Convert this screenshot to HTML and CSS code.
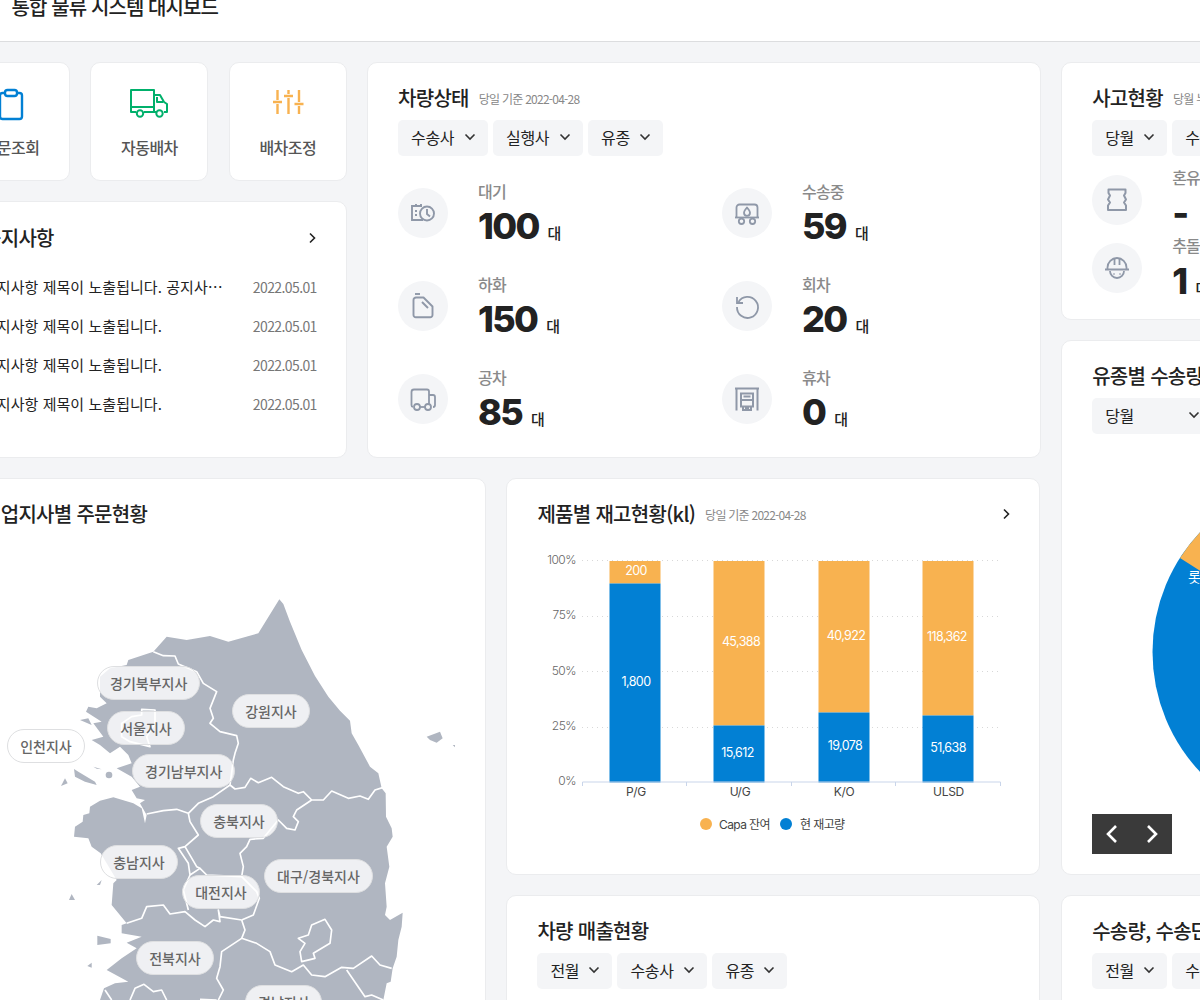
FILE: index.html
```html
<!DOCTYPE html>
<html lang="ko">
<head>
<meta charset="utf-8">
<title>통합 물류 시스템 대시보드</title>
<link rel="stylesheet" href="styles.css">
</head>
<body>
<div class="page">
  <header class="topbar"><h1 class="topbar-title">통합 물류 시스템 대시보드</h1></header>
  <main class="layout">
    <div class="col-main">
      <div class="row-top">
        <div class="col-left">
          <div class="quick-row">
            <a class="quick-card">
              <svg class="quick-icon" viewBox="0 0 38 38" fill="none" stroke="#0280d4" stroke-width="2.4" stroke-linejoin="round"><rect x="8" y="7" width="22" height="26" rx="2.5"/><rect x="13" y="4" width="12" height="6" rx="2.5" fill="#fff"/></svg>
              <span class="quick-label">주문조회</span>
            </a>
            <a class="quick-card">
              <svg class="quick-icon" viewBox="0 0 38 38" fill="none" stroke="#00b06b" stroke-width="2" stroke-linejoin="round"><path d="M6 26H1V4h23v22h-10"/><path d="M24 9h6l4 7 3 2v8h-3"/><path d="M27 11v5h6"/><path d="M1 21h23"/><circle cx="10" cy="27.500" r="3.200"/><circle cx="29.500" cy="27.500" r="3.200"/><path d="M14 26h12"/></svg>
              <span class="quick-label">자동배차</span>
            </a>
            <a class="quick-card">
              <svg class="quick-icon" viewBox="0 0 38 38" fill="none" stroke="#f8b250" stroke-width="2.400"><path d="M8.500 4v10M8.500 18v10M19.500 4v4M19.500 12v16M30 4v12M30 20v8M4 16h9M15 10h9M25.500 18h9"/></svg>
              <span class="quick-label">배차조정</span>
            </a>
          </div>
          <section class="card notice">
            <div class="notice-head">
              <h2 class="card-title">공지사항</h2>
              <svg class="chev-link" viewBox="0 0 10 12" fill="none" stroke="#222" stroke-width="1.6"><path d="M3 1.5 7.5 6 3 10.500"/></svg>
            </div>
            <ul class="notice-list">
              <li class="notice-row"><span class="notice-text">공지사항 제목이 노출됩니다. 공지사항 제목이 노출됩니다.</span><span class="notice-date">2022.05.01</span></li>
              <li class="notice-row"><span class="notice-text">공지사항 제목이 노출됩니다.</span><span class="notice-date">2022.05.01</span></li>
              <li class="notice-row"><span class="notice-text">공지사항 제목이 노출됩니다.</span><span class="notice-date">2022.05.01</span></li>
              <li class="notice-row"><span class="notice-text">공지사항 제목이 노출됩니다.</span><span class="notice-date">2022.05.01</span></li>
            </ul>
          </section>
        </div>
        <section class="card status">
          <div class="title-row"><h2 class="card-title">차량상태</h2><span class="card-sub">당일 기준 2022-04-28</span></div>
          <div class="selects">
            <div class="select wide">수송사<svg class="chev" viewBox="0 0 12 8" fill="none" stroke="#333" stroke-width="1.6"><path d="M1.500 1.500 6 6l4.500-4.500"/></svg></div>
            <div class="select wide">실행사<svg class="chev" viewBox="0 0 12 8" fill="none" stroke="#333" stroke-width="1.6"><path d="M1.500 1.500 6 6l4.500-4.500"/></svg></div>
            <div class="select">유종<svg class="chev" viewBox="0 0 12 8" fill="none" stroke="#333" stroke-width="1.6"><path d="M1.500 1.500 6 6l4.500-4.500"/></svg></div>
          </div>
          <div class="status-grid">
            <div class="stat">
              <div class="stat-icon"><svg class="stat-svg" viewBox="0 0 30 30" fill="none" stroke="#8f98a8" stroke-width="1.900"><path d="M14 8H4v14h11M8 6v3M13 6v3M7 13h2M7 17h2"/><circle cx="19" cy="15.500" r="7"/><path d="M19 11v5l3 2.500"/></svg></div>
              <div class="stat-body"><div class="stat-label">대기</div><div class="stat-value">100<span class="stat-unit">대</span></div></div>
            </div>
            <div class="stat">
              <div class="stat-icon"><svg class="stat-svg" viewBox="0 0 30 30" fill="none" stroke="#8f98a8" stroke-width="1.800" stroke-linejoin="round"><path d="M4.500 19v-9.500a3 3 0 0 1 3-3h15a3 3 0 0 1 3 3V19"/><path d="M15 9.500c-2 2.300-3 3.800-3 5.300a3 3 0 0 0 6 0c0-1.500-1-3-3-5.300z"/><path d="M3 19.500h24"/><circle cx="9.500" cy="23.300" r="2.700"/><circle cx="20.500" cy="23.300" r="2.700"/></svg></div>
              <div class="stat-body"><div class="stat-label">수송중</div><div class="stat-value">59<span class="stat-unit">대</span></div></div>
            </div>
            <div class="stat">
              <div class="stat-icon"><svg class="stat-svg" viewBox="0 0 30 30" fill="none" stroke="#8f98a8" stroke-width="1.900" stroke-linejoin="round"><path d="M7 3h5"/><path d="M8 6.500h7.500l9 9V24a2.300 2.300 0 0 1-2.300 2.300H7.800A2.300 2.300 0 0 1 5.500 24V9a2.500 2.500 0 0 1 2.500-2.500z"/><path d="M14 11l6 6"/></svg></div>
              <div class="stat-body"><div class="stat-label">하화</div><div class="stat-value">150<span class="stat-unit">대</span></div></div>
            </div>
            <div class="stat">
              <div class="stat-icon"><svg class="stat-svg" viewBox="0 0 30 30" fill="none" stroke="#8f98a8" stroke-width="1.800"><path d="M6.500 11A10.500 10.500 0 1 1 5 16"/><path d="M5 6v6h6"/></svg></div>
              <div class="stat-body"><div class="stat-label">회차</div><div class="stat-value">20<span class="stat-unit">대</span></div></div>
            </div>
            <div class="stat">
              <div class="stat-icon"><svg class="stat-svg" viewBox="0 0 30 30" fill="none" stroke="#8f98a8" stroke-width="1.800" stroke-linejoin="round"><path d="M5 23a2 2 0 0 1-1.500-2V8A2.500 2.500 0 0 1 6 5.500h13a2 2 0 0 1 2 2V21"/><path d="M21 11h4a2 2 0 0 1 2 2v8a2 2 0 0 1-2 2"/><circle cx="9" cy="23" r="3"/><circle cx="20" cy="23" r="3"/><path d="M12 23h5"/></svg></div>
              <div class="stat-body"><div class="stat-label">공차</div><div class="stat-value">85<span class="stat-unit">대</span></div></div>
            </div>
            <div class="stat">
              <div class="stat-icon"><svg class="stat-svg" viewBox="0 0 30 30" fill="none" stroke="#8f98a8" stroke-width="2"><path d="M3 4.500h24M4.500 4.500v22M25.500 4.500v22"/><path d="M9 9.500h12v13H9zM9 16h12M11.500 12.500h7M11 22v4h3v-4M19 22v4h-3v-4"/></svg></div>
              <div class="stat-body"><div class="stat-label">휴차</div><div class="stat-value">0<span class="stat-unit">대</span></div></div>
            </div>
          </div>
        </section>
      </div>
      <div class="row-bottom">
        <section class="card map-card">
          <div class="card-head"><h2 class="card-title">영업지사별 주문현황</h2></div>
          <div class="map-canvas">
            <svg class="map-svg" viewBox="0 0 1440 1230">
              <g fill="#b0b6c1">
                <path d="M838 28 850 42 870 95 905 180 945 258 985 320 1020 362 1050 392 1055 430 1075 465 1110 530 1135 550 1145 595 1157 610 1158 680 1175 715 1178 740 1160 770 1168 830 1155 880 1160 950 1155 975 1170 990 1208 968 1205 1010 1195 1050 1190 1100 1178 1135 1172 1175 1160 1180 1150 1230 300 1230 312 1195 345 1180 385 1175 320 1140 365 1105 410 1075 380 1058 425 1040 365 1030 365 1005 380 1000 335 945 340 880 350 870 302 790 275 770 265 745 222 740 225 710 248 695 250 675 268 670 270 650 300 632 340 622 400 640 425 655 435 700 440 675 420 640 435 630 410 625 395 600 420 590 395 560 350 535 395 520 385 495 360 470 330 490 300 465 275 450 310 440 280 400 305 395 258 365 265 350 290 355 320 340 300 320 300 260 330 235 380 225 385 210 460 185 500 140 560 150 630 138 685 155 775 130z"/>
                <path d="M1280 440 1320 425 1328 445 1310 458 1290 450z"/>
                <path d="M1358 465 1365 465 1365 472z"/>
                <path d="M240 390 265 385 275 405z"/>
                <path d="M222 537 235 545 285 575 290 585 255 575 225 560z"/>
                <path d="M280 530 305 538 290 536z"/>
                <circle cx="327" cy="555" r="10"/>
                <path d="M183 588 195 565 203 580z"/>
                <path d="M290 885 305 870 300 885z"/>
                <path d="M207 930 215 912 225 930z"/>
                <path d="M292 1037 332 1047 332 1060 292 1065z"/>
                <path d="M262 1128 275 1118 275 1133z"/>
              </g>
              <g fill="none" stroke="#fff" stroke-width="5" stroke-linejoin="round">
                <path d="M460 185 490 197 525 198 535 222 590 245 610 280 650 305 630 355 640 385 630 400 660 425 710 437 715 460 705 490 700 510 690 585"/>
                <path d="M690 585 640 620 595 640 565 670 530 658 490 662 440 672"/>
                <path d="M690 585 705 597 735 592 752 565 775 578 815 562 850 590 895 610 910 605 935 630 970 630 995 603 1045 625 1080 618 1105 628 1125 600 1150 592"/>
                <path d="M935 630 890 660 880 680 895 695 885 720 860 715 835 690 810 720 790 745 750 748 740 770 720 790 730 830 725 860 770 905 778 925 760 975 725 990"/>
                <path d="M565 670 570 695 595 735 555 770 535 775 565 820 570 855 600 835 620 855 725 860"/>
                <path d="M555 770 590 830 600 835"/>
                <path d="M570 855 550 900 565 960"/>
                <path d="M380 1000 425 985 440 950 490 945 510 972 555 965 585 990 615 1010 640 990 660 995 655 960 660 980 725 990"/>
                <path d="M725 990 735 1020 725 1045 770 1060 810 1085 825 1125 875 1145 910 1125 935 1155 975 1160 1025 1132 1060 1135 1115 1098 1140 1125 1175 1135"/>
                <path d="M725 1045 665 1085 660 1130 650 1165 670 1200 655 1230"/>
                <path d="M975 988 995 1020 990 1060 940 1090 945 1105 905 1115 900 1085 915 1060 895 1045 925 1035 935 1005z"/>
                <path d="M1040 1140 1095 1220 1115 1215 1150 1230"/>
                <path d="M315 1200 335 1230M390 1230 405 1195 432 1183 460 1205 485 1200 500 1230M600 1228 650 1230"/>
                <path d="M425 358 465 360 465 400 440 440 450 470 390 455 365 440 365 400 395 380 425 375z"/>
              </g>
            </svg>
            <span class="pin pin-gb">경기북부지사</span>
            <span class="pin pin-gw">강원지사</span>
            <span class="pin pin-se">서울지사</span>
            <span class="pin pin-ic">인천지사</span>
            <span class="pin pin-gn">경기남부지사</span>
            <span class="pin pin-cb">충북지사</span>
            <span class="pin pin-cn">충남지사</span>
            <span class="pin pin-dj">대전지사</span>
            <span class="pin pin-dg">대구/경북지사</span>
            <span class="pin pin-jb">전북지사</span>
            <span class="pin pin-gs">경남지사</span>
          </div>
        </section>
        <div class="col-mid">
          <section class="card chart-card">
            <div class="card-head head-between">
              <div class="title-row"><h2 class="card-title">제품별 재고현황(kl)</h2><span class="card-sub">당일 기준 2022-04-28</span></div>
              <svg class="chev-link" viewBox="0 0 10 12" fill="none" stroke="#222" stroke-width="1.6"><path d="M3 1.5 7.5 6 3 10.500"/></svg>
            </div>
            <svg class="chart-svg" viewBox="506 540 534 334">
              <g class="grid-lines">
                <path d="M582 560.500H1001M582 616.500H1001M582 671.500H1001M582 727.500H1001"/>
              </g>
              <g class="axis-y">
                <text x="576" y="564">100%</text><text x="576" y="619">75%</text><text x="576" y="675">50%</text><text x="576" y="730">25%</text><text x="576" y="785">0%</text>
              </g>
              <rect class="bar-o" x="609.500" y="561" width="51" height="22.500"/><rect class="bar-b" x="609.500" y="583.500" width="51" height="199"/>
              <rect class="bar-o" x="713.500" y="561" width="51" height="164.500"/><rect class="bar-b" x="713.500" y="725.500" width="51" height="57"/>
              <rect class="bar-o" x="818.500" y="561" width="51" height="151.500"/><rect class="bar-b" x="818.500" y="712.500" width="51" height="70"/>
              <rect class="bar-o" x="922.500" y="561" width="51" height="154.500"/><rect class="bar-b" x="922.500" y="715.500" width="51" height="67"/>
              <g class="bar-val">
                <text x="636" y="575">200</text><text x="636" y="686">1,800</text>
                <text x="741" y="646">45,388</text><text x="737.500" y="757">15,612</text>
                <text x="846" y="640">40,922</text><text x="845" y="750">19,078</text>
                <text x="947" y="641">118,362</text><text x="948" y="752">51,638</text>
              </g>
              <path class="axis-line" d="M582.500 786v-4H1000.500v4M686.500 782v4M791.500 782v4M895.500 782v4"/>
              <g class="axis-x">
                <text x="636" y="796">P/G</text><text x="740" y="796">U/G</text><text x="844" y="796">K/O</text><text x="948.500" y="796">ULSD</text>
              </g>
              <circle cx="706" cy="824" r="6" fill="#f8b250"/><text class="legend" x="719" y="829">Capa 잔여</text>
              <circle cx="786" cy="824" r="6" fill="#0280d4"/><text class="legend" x="800" y="829">현 재고량</text>
            </svg>
          </section>
          <section class="card sales-card">
            <h2 class="card-title">차량 매출현황</h2>
            <div class="selects">
              <div class="select">전월<svg class="chev" viewBox="0 0 12 8" fill="none" stroke="#333" stroke-width="1.6"><path d="M1.500 1.500 6 6l4.500-4.500"/></svg></div>
              <div class="select wide">수송사<svg class="chev" viewBox="0 0 12 8" fill="none" stroke="#333" stroke-width="1.6"><path d="M1.500 1.500 6 6l4.500-4.500"/></svg></div>
              <div class="select">유종<svg class="chev" viewBox="0 0 12 8" fill="none" stroke="#333" stroke-width="1.6"><path d="M1.500 1.500 6 6l4.500-4.500"/></svg></div>
            </div>
          </section>
        </div>
      </div>
    </div>
    <div class="col-right">
      <section class="card accident">
        <div class="title-row"><h2 class="card-title">사고현황</h2><span class="card-sub">당월 누적 기준 2022-04-28</span></div>
        <div class="selects">
          <div class="select">당월<svg class="chev" viewBox="0 0 12 8" fill="none" stroke="#333" stroke-width="1.6"><path d="M1.500 1.500 6 6l4.500-4.500"/></svg></div>
          <div class="select wide">수송사<svg class="chev" viewBox="0 0 12 8" fill="none" stroke="#333" stroke-width="1.6"><path d="M1.500 1.500 6 6l4.500-4.500"/></svg></div>
        </div>
        <div class="acc-list">
          <div class="acc-row">
            <div class="stat-icon"><svg class="stat-svg" viewBox="0 0 30 30" fill="none" stroke="#8f98a8" stroke-width="2" stroke-linejoin="round"><path d="M6.500 4.500h17V8L22 10.500l2 4-2 3 2 3V25H6v-4.500l2-3-2-3 2-4L6.500 8z"/></svg></div>
            <div class="stat-body"><div class="stat-label">혼유</div><div class="stat-value">-</div></div>
          </div>
          <div class="acc-row">
            <div class="stat-icon"><svg class="stat-svg" viewBox="0 0 30 30" fill="none" stroke="#8f98a8" stroke-width="1.800"><path d="M3 16.500h24M5.500 16.500v-2a9.500 9.500 0 0 1 19 0v2"/><path d="M12.500 5v7M17.500 5v7M8 18a7 7 0 0 0 14 0"/><path d="M11.500 21h1M17.500 21h1"/></svg></div>
            <div class="stat-body"><div class="stat-label">추돌</div><div class="stat-value">1<span class="stat-unit">대</span></div></div>
          </div>
        </div>
      </section>
      <section class="card product">
        <h2 class="card-title">유종별 수송량</h2>
        <div class="selects"><div class="select xl">당월<svg class="chev" viewBox="0 0 12 8" fill="none" stroke="#333" stroke-width="1.6"><path d="M1.500 1.500 6 6l4.500-4.500"/></svg></div></div>
        <div class="pie-wrap">
          <svg class="pie-svg" viewBox="0 0 400 380">
            <circle cx="235.500" cy="190" r="175" fill="#0280d4"/>
            <path d="M235.500 190 88 96A175 175 0 0 1 235.500 15z" fill="#f8b250"/>
            <text class="pie-label" x="96" y="120">롯데</text>
          </svg>
          <div class="pager">
            <svg class="pager-svg" viewBox="0 0 14 20" fill="none" stroke="#fff" stroke-width="2.600"><path d="M11 2 3 10l8 8"/></svg>
            <svg class="pager-svg" viewBox="0 0 14 20" fill="none" stroke="#fff" stroke-width="2.600"><path d="m3 2 8 8-8 8"/></svg>
          </div>
        </div>
      </section>
      <section class="card transport">
        <h2 class="card-title">수송량, 수송단가</h2>
        <div class="selects">
          <div class="select">전월<svg class="chev" viewBox="0 0 12 8" fill="none" stroke="#333" stroke-width="1.6"><path d="M1.500 1.500 6 6l4.500-4.500"/></svg></div>
          <div class="select wide">수송사<svg class="chev" viewBox="0 0 12 8" fill="none" stroke="#333" stroke-width="1.6"><path d="M1.500 1.500 6 6l4.500-4.500"/></svg></div>
        </div>
      </section>
    </div>
  </main>
</div>
</body>
</html>
```
FILE: styles.css
```css
* { box-sizing: border-box; }
html, body { margin: 0; height: 1000px; overflow: hidden; background: #f4f5f7; }
body { font-family: "Noto Sans CJK KR", "Noto Sans", sans-serif; color: #222; }
h1, h2, ul { margin: 0; padding: 0; }
ul { list-style: none; }

.page { width: 1643px; margin: -30px 0 0 -48px; }
.topbar { height: 72px; padding: 22px 0 0 59.5px; background: #fff; border-bottom: 1px solid #dcdddf; }
.topbar-title { font-size: 20px; line-height: 30px; font-weight: 500; color: #222; letter-spacing: -0.9px; }

.layout { display: flex; gap: 20.6px; padding-top: 20px; }
.col-main { width: 1088.6px; display: flex; flex-direction: column; gap: 20px; }
.col-right { width: 534px; display: flex; flex-direction: column; gap: 20px; }
.row-top { display: flex; gap: 20.2px; height: 396px; }
.row-bottom { display: flex; gap: 20.4px; }
.col-left { width: 394.8px; display: flex; flex-direction: column; gap: 20px; }
.col-mid { width: 534px; display: flex; flex-direction: column; gap: 20px; }

.card { background: #fff; border: 1px solid #ebecee; border-radius: 10px; }
.card-title { font-size: 20px; line-height: 30px; font-weight: 500; color: #222; letter-spacing: -0.7px; }
.card-sub { font-size: 12px; color: #888; letter-spacing: -0.75px; }
.title-row { display: flex; align-items: center; gap: 10px; }
.card-head { padding: 20px 30px 0; }
.head-between { display: flex; justify-content: space-between; align-items: center; padding-right: 28px; }
.chev-link { width: 10px; height: 12px; flex: none; }

.quick-row { display: flex; gap: 20.5px; height: 119px; }
.quick-card { flex: 1; background: #fff; border: 1px solid #ebecee; border-radius: 10px; display: flex; flex-direction: column; align-items: center; padding-top: 23px; }
.quick-icon { width: 38px; height: 38px; flex: none; }
.quick-label { margin-top: 10px; font-size: 16px; line-height: 26px; font-weight: 500; color: #555; letter-spacing: -0.5px; }

.notice { flex: 1; padding: 21px 29px 0 30px; }
.notice-head { display: flex; justify-content: space-between; align-items: center; }
.notice-list { margin-top: 14px; }
.notice-row { display: flex; justify-content: space-between; align-items: center; height: 39px; gap: 29px; }
.notice-text { flex: 1; min-width: 0; font-size: 15px; color: #222; letter-spacing: 0.05px; white-space: nowrap; overflow: hidden; text-overflow: ellipsis; }
.notice-date { flex: none; font-size: 14px; color: #777; letter-spacing: -0.6px; }

.status { width: 673.6px; padding: 20px 30px 0; }
.selects { display: flex; gap: 5px; margin-top: 7px; }
.select { width: 75px; height: 36px; padding: 0 12px 2px 13px; background: #f4f5f7; border-radius: 5px; display: flex; align-items: center; justify-content: space-between; font-size: 16px; letter-spacing: -0.3px; color: #222; flex: none; }
.select.wide { width: 90px; }
.select.xl { width: 120px; }
.chev { width: 12px; height: 8px; }

.status-grid { display: grid; grid-template-columns: 324px 1fr; grid-auto-rows: 93px; margin-top: 24px; }
.stat { display: flex; gap: 30px; }
.stat-icon { width: 50px; height: 50px; margin-top: 8px; border-radius: 50%; background: #f4f5f7; display: flex; align-items: center; justify-content: center; flex: none; }
.stat-svg { width: 30px; height: 30px; }
.stat-label { font-size: 16px; line-height: 22px; font-weight: 500; color: #8a8a8a; letter-spacing: -0.8px; }
.stat-value { margin-top: 2px; font-family: Inter, sans-serif; font-size: 36px; line-height: 44px; font-weight: 800; color: #222; letter-spacing: -1.7px; }
.stat-unit { margin-left: 9px; font-family: "Noto Sans CJK KR", sans-serif; font-size: 15px; font-weight: 500; letter-spacing: 0; }

.accident { height: 258px; padding: 20px 30px 0; }
.accident .card-sub { white-space: nowrap; }
.acc-list { margin-top: 19px; display: flex; flex-direction: column; gap: 18px; }
.acc-row { display: flex; gap: 30px; height: 50px; }
.acc-row .stat-icon { margin-top: 0; }
.acc-row .stat-value { line-height: 36px; margin-top: 7px; }
.acc-row .stat-label { margin-top: -9px; }

.product { height: 535px; padding: 20px 30px 0; }
.pie-wrap { position: relative; }
.pie-svg { display: block; position: absolute; left: 0; top: 28px; width: 400px; height: 380px; }
.pie-label { font-size: 14px; fill: #fff; font-family: "Noto Sans CJK KR", sans-serif; }
.pager { position: absolute; left: 0; top: 380px; width: 80px; height: 40px; background: #3a3a3a; display: flex; align-items: center; justify-content: space-between; padding: 0 13px; }
.pager-svg { width: 14px; height: 20px; }
.transport, .sales-card { padding: 20px 30px 0; height: 400px; }

.map-card { width: 534px; }
.map-canvas { position: relative; margin-top: 61px; padding-left: 47px; height: 470px; }
.map-svg { display: block; width: 480px; height: 410px; }
.pin { position: absolute; height: 34px; padding: 0 12px; border-radius: 17px; background: rgba(255, 255, 255, 0.8); border: 1px solid #dedfe1; font-size: 14px; font-weight: 500; line-height: 32px; color: #666; text-align: center; white-space: nowrap; }
.pin-gb { left: 144px; top: 76px; width: 103px; }
.pin-gw { left: 279px; top: 104px; width: 78px; }
.pin-se { left: 154px; top: 121px; width: 78px; }
.pin-ic { left: 54px; top: 139px; width: 78px; background: #fff; }
.pin-gn { left: 179px; top: 164px; width: 103px; }
.pin-cb { left: 247px; top: 214px; width: 78px; }
.pin-cn { left: 147px; top: 255px; width: 78px; }
.pin-dj { left: 229px; top: 285px; width: 78px; }
.pin-dg { left: 311px; top: 269px; width: 109px; }
.pin-jb { left: 183px; top: 351px; width: 78px; }
.pin-gs { left: 292px; top: 395px; width: 77px; }

.chart-card { height: 397px; }
.chart-svg { display: block; width: 534px; height: 334px; margin-top: 11px; margin-left: -1px; font-family: Inter, "Noto Sans CJK KR", sans-serif; }
.grid-lines path { fill: none; stroke: #d8d8d8; stroke-width: 1; stroke-dasharray: 1 4; }
.axis-y text { font-size: 12px; font-weight: 300; fill: #666; text-anchor: end; letter-spacing: -0.5px; }
.axis-x text { font-size: 12px; fill: #444; text-anchor: middle; letter-spacing: -0.3px; }
.bar-o { fill: #f8b250; }
.bar-b { fill: #0280d4; }
.bar-val text { font-size: 12.5px; fill: #fff; text-anchor: middle; letter-spacing: -0.6px; }
.axis-line { fill: none; stroke: #c9d5ea; stroke-width: 1; }
.legend { font-size: 12px; fill: #444; letter-spacing: -0.6px; }
```
